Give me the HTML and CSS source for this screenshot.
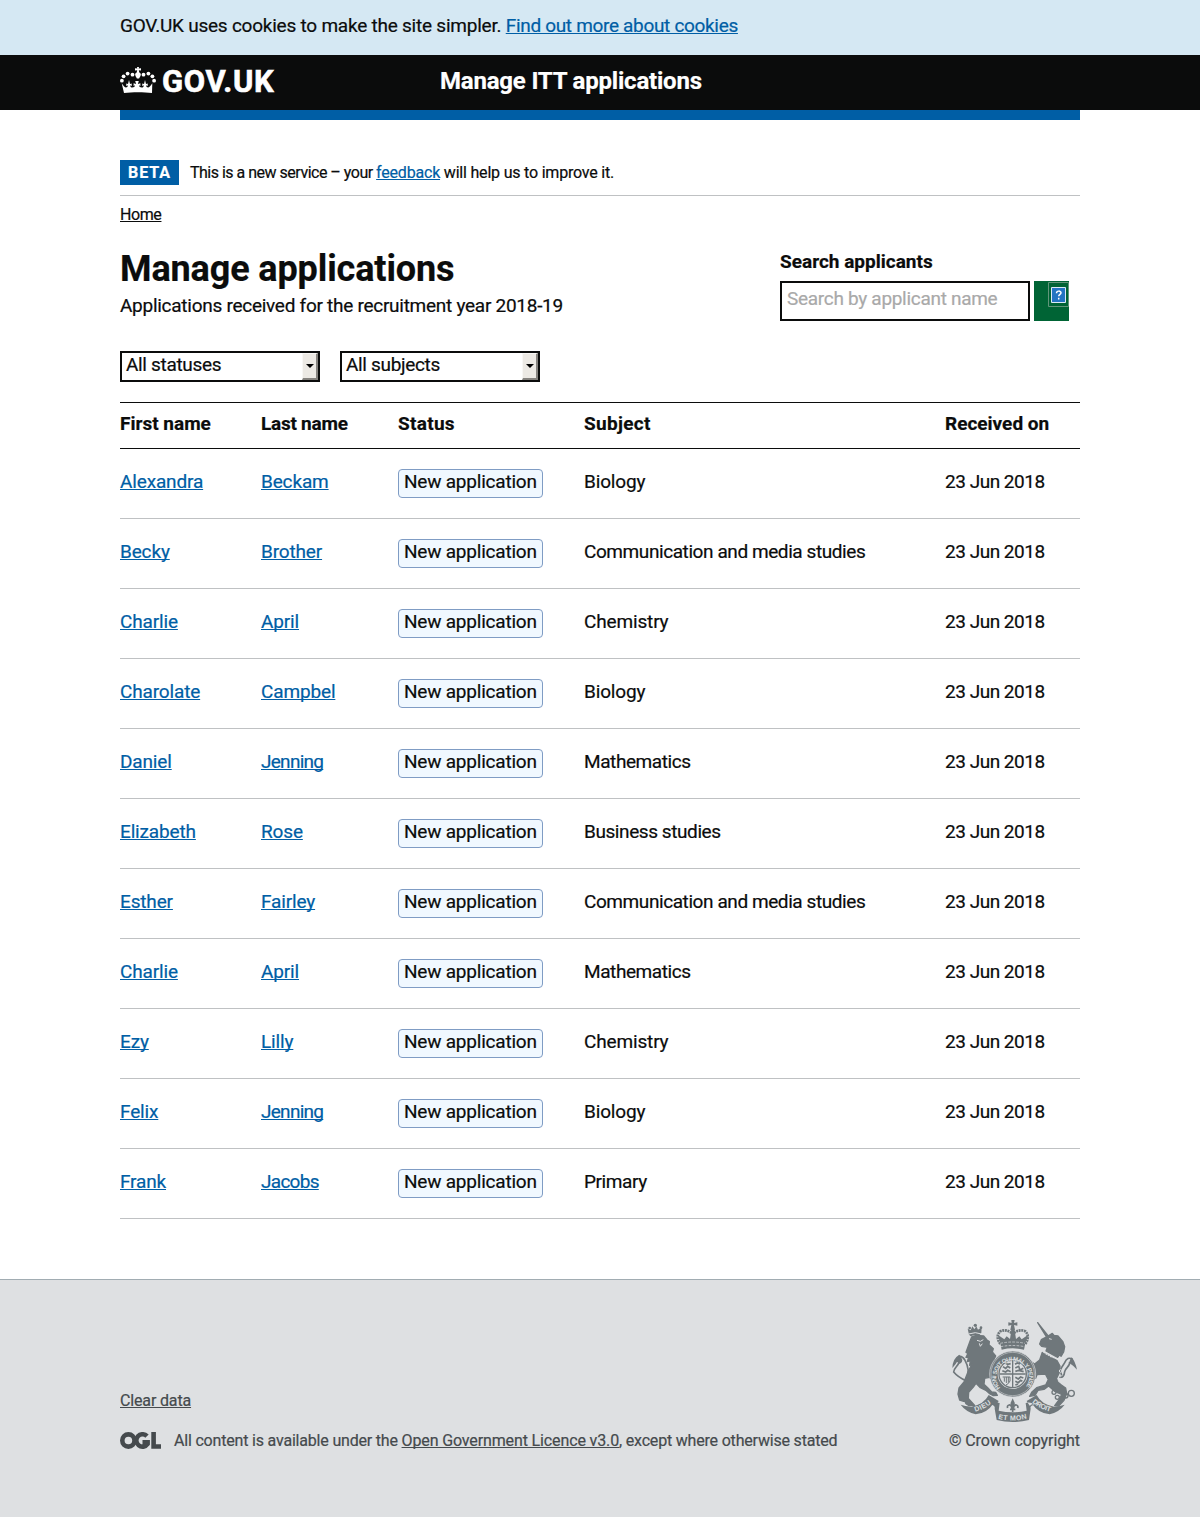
FILE: index.html
```html
<!DOCTYPE html>
<html lang="en">
<head>
<meta charset="utf-8">
<title>Manage applications</title>
<link rel="stylesheet" href="styles.css">
</head>
<body>
<div class="cookie"><div class="wrap"><p class="t-cookie">GOV.UK uses cookies to make the site simpler. <a href="#">Find out more about cookies</a></p></div></div>
<header class="header">
  <div class="wrap header-row">
    <a class="logo" href="#">
      <svg class="crown" viewBox="0 0 36 27" width="36" height="27" aria-hidden="true">
        <g fill="#fff">
          <circle cx="1.900" cy="13.700" r="1.900"/><circle cx="3.600" cy="9.300" r="1.900"/><circle cx="7.600" cy="6.600" r="1.900"/><circle cx="12.500" cy="7.700" r="1.900"/>
          <circle cx="34.100" cy="13.700" r="1.900"/><circle cx="32.400" cy="9.300" r="1.900"/><circle cx="28.400" cy="6.600" r="1.900"/><circle cx="23.500" cy="7.700" r="1.900"/>
          <path d="M17 0h2l-.3 1.600 2.300-.4v2.300l-2.200-.3.5 2.300c1.200.5 1.700 1.400 1.500 2.500-.2 1.200-1.100 2.200-1.700 3.500h-2.200c-.6-1.300-1.500-2.300-1.700-3.500-.2-1.100.3-2 1.500-2.500l.5-2.300-2.200.3V1.200l2.300.4z"/>
          <path d="M4 26 1.700 16.300c1.500 1.700 2.600 4.200 4.100 4.200 1.300 0 2.100-1 1.900-2.300l-1.500.7.1-2.500 1.700.6L9 13l1 4 1.700-.6.1 2.500-1.500-.7c-.2 1.500.7 2.300 2 2.300 1.400 0 2.700-.8 2.600-2.200l-1.300.6v-2.700l2.500.8-.9-3h3.600l-.9 3 2.500-.8v2.700l-1.300-.6c-.1 1.400 1.200 2.200 2.600 2.200 1.300 0 2.200-.8 2-2.300l-1.500.7.1-2.500 1.700.6 1-4 1 4 1.700-.6.1 2.500-1.500-.7c-.2 1.300.6 2.300 1.900 2.300 1.500 0 2.600-2.500 4.100-4.200L32 26c-8-1-20-1-28 0z"/>
        </g>
      </svg>
      <span>GOV.UK</span>
    </a>
    <a class="service" href="#">Manage ITT applications</a>
  </div>
</header>
<main class="wrap main">
  <div class="phase"><strong class="tag">BETA</strong><span class="t-phase"><span class="t-intro">This is a new service – your </span><a href="#">feedback</a> will help us to improve it.</span></div>
  <nav class="crumb"><a href="#">Home</a></nav>
  <div class="top">
    <div>
      <h1>Manage applications</h1>
      <p class="sub">Applications received for the recruitment year 2018-19</p>
    </div>
    <form class="search">
      <label for="q">Search applicants</label>
      <div class="search-row">
        <input id="q" type="text" placeholder="Search by applicant name">
        <button type="button" aria-label="Search"><svg width="21" height="25" viewBox="0 0 21 25"><path d="M.5.5h20v24H.5z" fill="none" stroke="#61967a"/><path d="M3.500 5.500h14v15h-14z" fill="#2374c2" stroke="#dceaf7"/><path d="M8.500 11.200c0-2.700 4.500-2.700 4.500-.4 0 1.700-2.300 1.500-2.300 3.500M10.700 15.700v1.800" fill="none" stroke="#fff" stroke-width="1.500"/></svg></button>
      </div>
    </form>
  </div>
  <div class="filters">
    <div class="select"><span>All statuses</span><i></i></div>
    <div class="select"><span>All subjects</span><i></i></div>
  </div>
  <table>
    <thead><tr><th class="c1">First name</th><th class="c2">Last name</th><th class="c3">Status</th><th class="c4">Subject</th><th class="c5">Received on</th></tr></thead>
    <tbody>
      <tr><td><a href="#">Alexandra</a></td><td><a href="#">Beckam</a></td><td><span class="badge">New application</span></td><td>Biology</td><td>23 Jun 2018</td></tr>
      <tr><td><a href="#">Becky</a></td><td><a href="#">Brother</a></td><td><span class="badge">New application</span></td><td class="long">Communication and media studies</td><td>23 Jun 2018</td></tr>
      <tr><td><a href="#">Charlie</a></td><td><a href="#">April</a></td><td><span class="badge">New application</span></td><td>Chemistry</td><td>23 Jun 2018</td></tr>
      <tr><td><a href="#">Charolate</a></td><td><a href="#">Campbel</a></td><td><span class="badge">New application</span></td><td>Biology</td><td>23 Jun 2018</td></tr>
      <tr><td><a href="#">Daniel</a></td><td><a class="tight" href="#">Jenning</a></td><td><span class="badge">New application</span></td><td class="long">Mathematics</td><td>23 Jun 2018</td></tr>
      <tr><td><a href="#">Elizabeth</a></td><td><a href="#">Rose</a></td><td><span class="badge">New application</span></td><td class="long">Business studies</td><td>23 Jun 2018</td></tr>
      <tr><td><a href="#">Esther</a></td><td><a href="#">Fairley</a></td><td><span class="badge">New application</span></td><td class="long">Communication and media studies</td><td>23 Jun 2018</td></tr>
      <tr><td><a href="#">Charlie</a></td><td><a href="#">April</a></td><td><span class="badge">New application</span></td><td class="long">Mathematics</td><td>23 Jun 2018</td></tr>
      <tr><td><a href="#">Ezy</a></td><td><a href="#">Lilly</a></td><td><span class="badge">New application</span></td><td>Chemistry</td><td>23 Jun 2018</td></tr>
      <tr><td><a href="#">Felix</a></td><td><a class="tight" href="#">Jenning</a></td><td><span class="badge">New application</span></td><td>Biology</td><td>23 Jun 2018</td></tr>
      <tr><td><a href="#">Frank</a></td><td><a class="tight" href="#">Jacobs</a></td><td><span class="badge">New application</span></td><td class="long">Primary</td><td>23 Jun 2018</td></tr>
    </tbody>
  </table>
</main>
<footer class="footer">
  <div class="wrap footer-row">
    <div class="meta">
      <a class="clear" href="#">Clear data</a>
      <div class="licence">
        <svg class="ogl" width="41" height="17" viewBox="0 0 41 17" role="img" aria-label="OGL" fill="none" stroke="#454a4d" stroke-width="4.600"><circle cx="8.400" cy="8.500" r="6.100"/><path d="M27 4.200A6.200 6.200 0 1 0 27.600 12V10.200H22.500"/><path d="M33.600 0v14.500H41"/></svg>
        <p class="t-lic">All content is available under the <a href="#">Open Government Licence v3.0</a>, except where otherwise stated</p>
      </div>
    </div>
    <div class="crest">
      <svg width="125" height="102" viewBox="36 30 375 306" aria-hidden="true">
        <defs>
          <path id="garter" d="M181 234A49 49 0 1 1 255 234"/>
          <path id="dieu" d="M106 305Q138 296 160 275"/>
          <path id="mon" d="M174 326Q218 338 266 324"/>
          <path id="droit" d="M276 277Q300 298 336 306"/>
        </defs>
        <g fill="#6f777b" stroke="#6f777b" stroke-width="4" stroke-linejoin="round">
          <!-- lion -->
          <path d="M90 94l5-13 14-5 22 2 10 12 7 5-1 9 13 12-3 10 10 12-4 9 6 18-5 8 2 16c-8-2-15-9-20-14l3 14 13 7 8 14-8 3-14-11-14 3-2 18 11 10 12 13 12 1 5 9-12 1-10-5-11-10-18-9-13-13-8 11-14 16-1 18 19 21-17 1-9-6-4-9-3 2-12-4-5-18 3-18 15-18 13-33 12-22-8 5 2-14-9 3 4-14-8 1 6-12-6-3z"/>
          <!-- unicorn -->
          <path d="M293 38l31 39-5 3zM323 79l14-9 5 6 12 2 14 16 6 16-3 16-8 13-1-9-9 12-35-19 4-11-17-3-6-7 5-13z"/>
          <path d="M307 127l44 25 9 16-1 18-10 21 12 16 16 11 3 17-8 20-16 17-12-1 15-20 6-14-21-9-18-16-14 10-18 3-9 15-16 3 6-12 15-14 27-8 8-16-9-17-25 2-4 11-9-10 6-10-13-22-16-4 11-9 18 12 15-12z"/>
        </g>
        <g fill="#6f777b">
          <path d="M57 162q-5-12-10 0l-10 12q1-29 21-40 15 16 4 26z"/>
          <path d="M389 160q0-13 6-18 11 13 16 37-11-12-22-19z"/>
          <path d="M87 74l-4-18 9 5 5-12 6 9 6-9 5 10 11-7-1 17-8 9q-12-5-24 1z"/><circle cx="106" cy="46" r="5"/><circle cx="89" cy="54" r="4"/><circle cx="123" cy="53" r="4"/>
          <!-- helm crown -->
          <path d="M214 30h10l-2 9 10-2v10l-10-2 3 14-4 5h-6l-4-5 3-14-9 2V37l10 2zM181 100l-8-26 20 14 7-9 10 8 4-26h10l4 26 10-8 7 9 20-14-9 26-4 19q-34-8-67 0z"/>
          <!-- ribbon -->
          <path d="M62 284q12 5 32 6 38-7 52-35l30 18-9 14-8-5q-18 28-52 31-30-8-45-29zM374 284q-12 5-32 6-38-7-52-35l-30 18 9 14 8-5q18 28 52 31 30-8 45-29zM155 284q10-10 24-5l-3 23q42 10 84 0l-3-23q14-5 25 5-13 3-10 12l-5 34q-49 12-97 0l-6-34q2-9-9-12z"/>
        </g>
        <g fill="none" stroke="#6f777b" stroke-width="4">
          <path d="M57 156c-2 12-16 18-16 30q12 15 40 28M78 210c12-20 5-45-4-61q-8-12-18-9" stroke-width="5"/>
          <path d="M389 155c3 13-13 18-15 30q-2 20-16 17M365 196c-9-19 4-28 9-38q8-20 24-10" stroke-width="5"/>
          <path d="M181 102q-16-24 0-38 16-8 34 5M256 102q15-24 0-38-16-8-34 5" stroke-width="8" stroke-dasharray="6 2"/>
          <circle cx="342" cy="247" r="6"/><circle cx="352" cy="262" r="6"/><circle cx="377" cy="257" r="7"/><circle cx="394" cy="250" r="9"/>
        </g>
        <circle cx="218" cy="192" r="69" fill="#6f777b" stroke="#dee0e2" stroke-width="2"/>
        <circle cx="218" cy="192" r="65" fill="none" stroke="#dee0e2" stroke-width="1.500"/>
        <circle cx="218" cy="192" r="45" fill="#dee0e2"/>
        <circle cx="218" cy="192" r="41" fill="none" stroke="#6f777b" stroke-width="4"/>
        <g fill="none" stroke="#6f777b" stroke-width="5">
          <path d="M218 153v78M179 192h78" stroke-width="4"/>
          <path d="M189 170l8 5 6-6 8 5M187 182l10 4 6-5 9 4M197 160l6 3 9-2M225 163l7-4 8 3M226 174l10-5 4 11 10-5M226 184l10-3 15 4M226 202l9 5 7-6 8 3M226 214l9 4 7-7 5 3M226 225l8-3"/>
          <path d="M188 201h22v12q-4 9-12 12M193 202v13M199 201v18M205 201v17" stroke-width="3"/>
        </g>
        <g fill="none" stroke="#dee0e2" stroke-width="3">
          <path d="M181 100q37-8 74 0M182 110q36-7 72 0" stroke-width="2" stroke-dasharray="8 4"/>
          <path d="M304 120q24 22 56 28" stroke-width="4" stroke-dasharray="6 2"/>
          <path d="M86 72q20-8 39 0M111 91l10 3 9-5M118 100l3 9 6-8M327 86l8 2" stroke-width="3"/>
          <circle cx="361" cy="211" r="6"/><circle cx="362" cy="183" r="4"/>
        </g>
        <g fill="none" stroke="#6f777b" stroke-width="5"><path d="M218 275v31M210 298h16M216 296c-2-17-17-12-13-2M220 296c2-17 17-12 13-2M218 271l-4 9 4 8 4-8z"/></g>
        <g class="motto" fill="#dee0e2">
          <text><textPath href="#garter" textLength="218">HONI SOIT QUI MAL Y PENSE</textPath></text>
          <text class="ribbon"><textPath href="#dieu" textLength="54">DIEU</textPath></text>
          <text class="ribbon"><textPath href="#mon" textLength="88">ET MON</textPath></text>
          <text class="ribbon"><textPath href="#droit" textLength="62">DROIT</textPath></text>
        </g>
      </svg>
      <a href="#">© Crown copyright</a>
    </div>
  </div>
</footer>
</body>
</html>
```
FILE: styles.css
```css
* { box-sizing: border-box; }
body { margin: 0; font-family: Roboto, "Liberation Sans", sans-serif; font-size: 19px; line-height: 25px; color: #0b0c0c; background: #fff; -webkit-text-stroke: .2px; }
p, h1 { margin: 0; }
a { color: #005ea5; text-underline-offset: 1px; text-decoration-thickness: 1px; text-decoration-skip-ink: none; }
.wrap { width: 960px; margin: 0 auto; }
.cookie { height: 55px; padding-top: 13px; background: #d5e8f3; }
.t-cookie { letter-spacing: -.23px; }
.t-cookie a { letter-spacing: -.32px; }
.header { height: 55px; background: #0b0c0c; }
.header-row { display: flex; height: 65px; border-bottom: 10px solid #005ea5; }
.header a { color: #fff; text-decoration: none; font-weight: 700; }
.logo { display: flex; width: 320px; font-size: 31px; line-height: 53px; letter-spacing: .7px; -webkit-text-stroke: .6px; }
.crown { margin: 12px 6px 0 0; }
.service { font-size: 24px; line-height: 52px; letter-spacing: -.2px; }
.main { height: 1169px; padding-top: 50px; }
.phase { display: flex; height: 36px; border-bottom: 1px solid #bfc1c3; font-size: 16px; letter-spacing: -.2px; }
.t-intro { letter-spacing: -.5px; }
.tag { width: 59px; height: 25px; margin-right: 11px; background: #005ea5; color: #fff; text-align: center; letter-spacing: .9px; }
.crumb { height: 55px; padding-top: 6px; font-size: 16px; letter-spacing: -.4px; }
.crumb a { color: #0b0c0c; }
.top { display: flex; justify-content: space-between; height: 100px; }
h1 { font-size: 36px; line-height: 36px; font-weight: 700; letter-spacing: -.12px; }
.sub { margin-top: 6px; letter-spacing: -.27px; }
.search { width: 300px; }
.search label { display: block; height: 30px; line-height: 22px; font-weight: 700; }
.search-row { display: flex; gap: 4px; }
.search input { width: 250px; height: 40px; padding: 0 5px 6px; border: 2px solid #0b0c0c; font: inherit; letter-spacing: -.3px; }
.search input::placeholder { color: #a9a9a9; opacity: 1; }
.search button { width: 35px; height: 40px; padding: 1px 0 0; border: 0; background: #006435; display: flex; justify-content: flex-end; align-items: flex-start; }
.filters { display: flex; gap: 20px; height: 51px; }
.select { display: flex; justify-content: space-between; width: 200px; height: 31px; border: 2px solid #0b0c0c; padding-left: 4px; line-height: 23px; letter-spacing: -.33px; }
.select i { width: 16px; height: 27px; background: #ece9e4; border: 1px solid #f8f7f5; border-right: 2px solid #85827e; border-bottom: 2px solid #85827e; display: flex; justify-content: center; align-items: center; }
.select i::after { content: ""; border: 4px solid transparent; border-top-color: #000; border-bottom: 0; }
table { width: 960px; border-collapse: collapse; table-layout: fixed; }
th { height: 46px; padding: 0 0 4px; text-align: left; border-top: 1px solid #0b0c0c; border-bottom: 1px solid #0b0c0c; letter-spacing: 0; }
th.c2 { letter-spacing: -.25px; }
th.c3, th.c4 { letter-spacing: .3px; }
td { height: 70px; padding: 0 0 4px; border-bottom: 1px solid #bfc1c3; letter-spacing: -.15px; }
.long { letter-spacing: -.42px; }
td:last-child { letter-spacing: -.48px; }
.tight { letter-spacing: -.72px; }
.c1 { width: 141px; } .c2 { width: 137px; } .c3 { width: 186px; } .c4 { width: 361px; } .c5 { width: 135px; }
td:nth-child(3) { padding: 0 0 1px; }
.badge { display: block; width: 145px; height: 29px; padding-left: 5px; border: 1px solid #7f9cc4; border-radius: 4px; background: #f0f8ff; white-space: nowrap; line-height: 24px; letter-spacing: -.22px; }
.footer { height: 238px; border-top: 1px solid #a1acb2; background: #dee0e2; color: #454a4d; font-size: 16px; letter-spacing: -.15px; }
.footer a { color: #454a4d; }
.footer-row { display: flex; justify-content: space-between; padding-top: 40px; }
.meta { padding-top: 68px; }
.licence { display: flex; margin-top: 15px; }
.t-lic { letter-spacing: -.19px; }
.t-lic a { letter-spacing: -.13px; }
.ogl { margin: 4px 13px 0 0; }
.crest { display: flex; flex-direction: column; align-items: flex-end; }
.crest svg { margin: 0 3px 6px 0; }
.crest a { text-decoration: none; letter-spacing: -.08px; }
.motto { font-family: "Liberation Sans", sans-serif; font-size: 18px; font-weight: 700; letter-spacing: 0; -webkit-text-stroke: 0; }
.ribbon { font-size: 21px; }
```
